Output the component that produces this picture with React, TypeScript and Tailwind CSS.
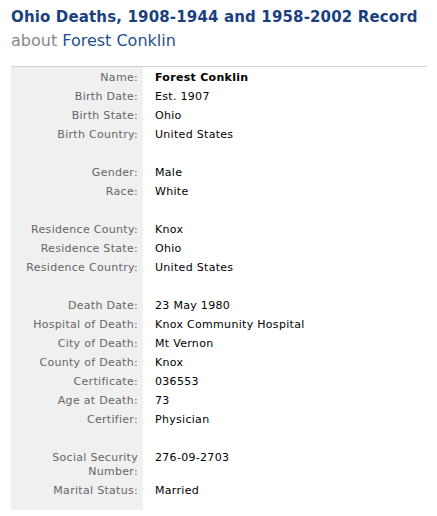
import React from "react";

type Row = { label: string; value: string; bold?: boolean } | null;

const rows: Row[] = [
  { label: "Name:", value: "Forest Conklin", bold: true },
  { label: "Birth Date:", value: "Est. 1907" },
  { label: "Birth State:", value: "Ohio" },
  { label: "Birth Country:", value: "United States" },
  null,
  { label: "Gender:", value: "Male" },
  { label: "Race:", value: "White" },
  null,
  { label: "Residence County:", value: "Knox" },
  { label: "Residence State:", value: "Ohio" },
  { label: "Residence Country:", value: "United States" },
  null,
  { label: "Death Date:", value: "23 May 1980" },
  { label: "Hospital of Death:", value: "Knox Community Hospital" },
  { label: "City of Death:", value: "Mt Vernon" },
  { label: "County of Death:", value: "Knox" },
  { label: "Certificate:", value: "036553" },
  { label: "Age at Death:", value: "73" },
  { label: "Certifier:", value: "Physician" },
  null,
  { label: "Social Security Number:", value: "276-09-2703" },
  { label: "Marital Status:", value: "Married" },
];

const App = () => {
  return (
    <div className="w-[437px] h-[516px] bg-white font-['DejaVu_Sans',sans-serif]">
      <div className="pl-[11px] pt-[6px]">
        <h1 className="text-[15px] leading-[22px] font-bold text-[#1b3f7f] tracking-[0.15px]">
          Ohio Deaths, 1908-1944 and 1958-2002 Record
        </h1>
        <h2 className="mt-[2px] text-[16px] leading-[22px] text-[#888]">
          about <span className="text-[#1f4f8e]">Forest Conklin</span>
        </h2>
      </div>

      <div className="mt-[14px] ml-[11px] w-[415px] border-t border-[#d0d0d0] flex text-[11px] leading-[14px] tracking-[0.3px]">
        <div className="w-[132px] bg-[#f0f0f0] pt-[1px] pb-[10px]">
          {rows.map((row, idx) =>
            row ? (
              <div key={idx} className="py-[2.5px] pr-[5px] text-right text-[#666]">
                {row.label === "Social Security Number:" ? (
                  <>
                    Social Security
                    <br />
                    Number:
                  </>
                ) : (
                  row.label
                )}
              </div>
            ) : (
              <div key={idx} className="h-[19px]" />
            )
          )}
        </div>
        <div className="flex-1 pt-[1px] pl-[12px]">
          {rows.map((row, idx) =>
            row ? (
              <div
                key={idx}
                className={
                  row.label === "Social Security Number:"
                    ? "py-[2.5px] h-[33px] text-black"
                    : row.bold
                    ? "py-[2.5px] font-bold text-black"
                    : "py-[2.5px] text-black"
                }
              >
                {row.value}
              </div>
            ) : (
              <div key={idx} className="h-[19px]" />
            )
          )}
        </div>
      </div>
    </div>
  );
};

export default App;
